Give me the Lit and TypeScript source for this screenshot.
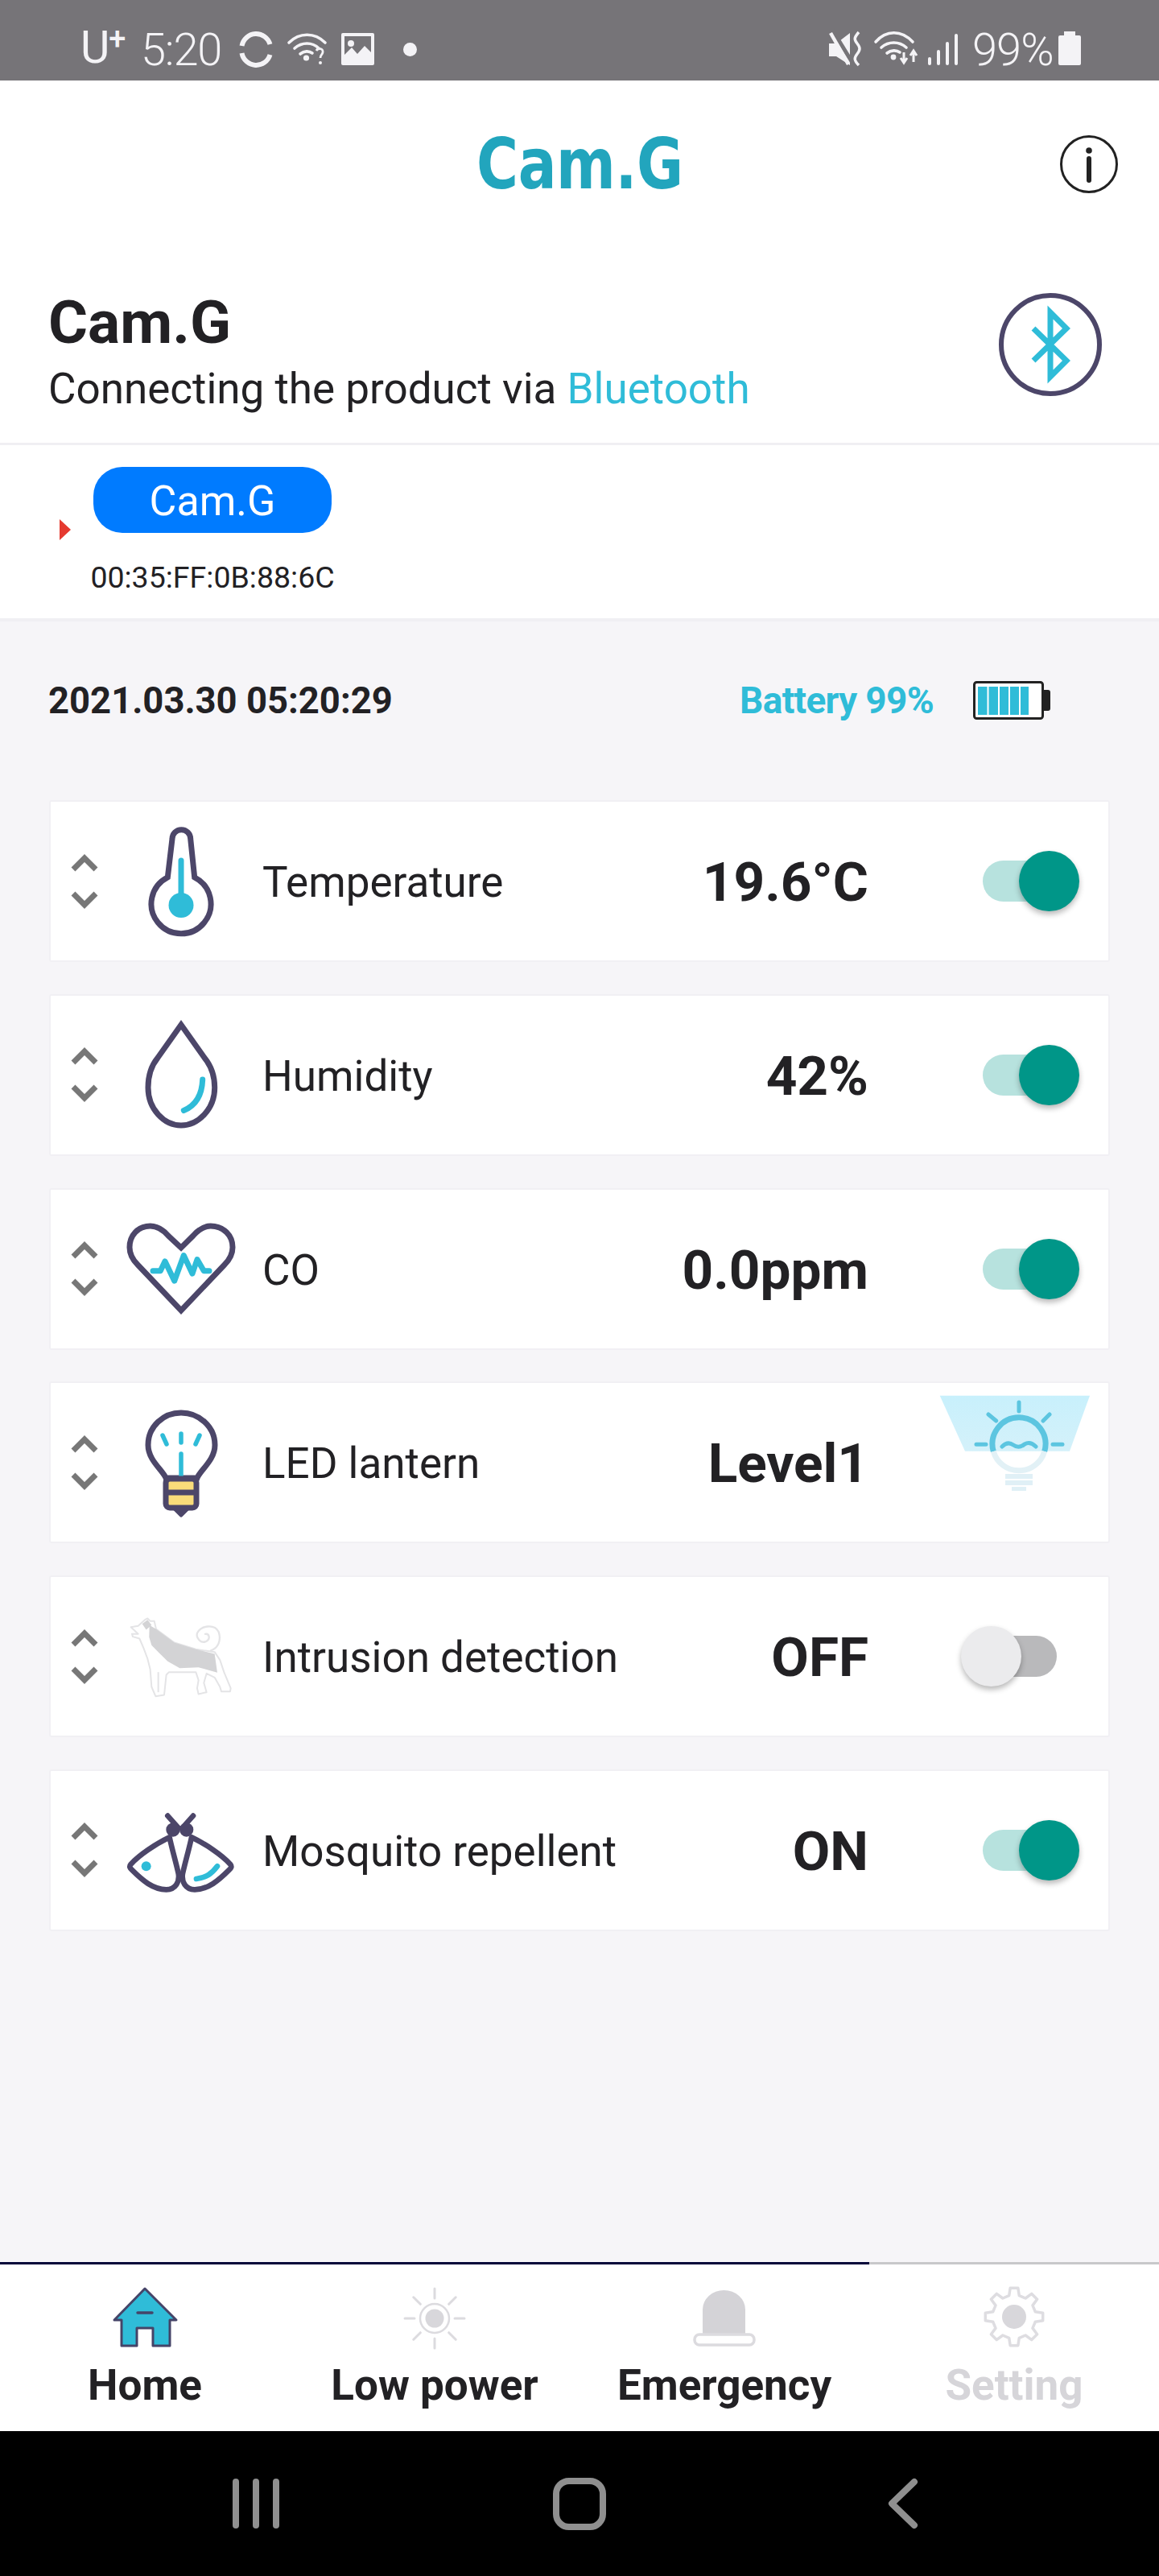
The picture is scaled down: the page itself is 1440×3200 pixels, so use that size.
import { LitElement, html, css, svg } from "lit";
import { customElement } from "lit/decorators.js";

const DARK = "#4c4669";
const TEAL = "#2fbcd8";

const thermo = svg`<path d="M48.3 59.8 L54 12 A11.3 11.3 0 0 1 76.7 12 L81.7 59.8 A37 37 0 1 1 48.3 59.8 Z" fill="none" stroke="${DARK}" stroke-width="7"/>
<path d="M65 39 V92" stroke="${TEAL}" stroke-width="7" stroke-linecap="round"/><circle cx="65" cy="94.5" r="15.5" fill="${TEAL}"/>`;

const drop = svg`<path d="M65 3 L36 44 C27 55 24 68 24 81 C24 108 44 128 65 128 C86 128 106.7 108 106.7 81 C106.7 68 103 55 94 44 Z" fill="none" stroke="${DARK}" stroke-width="7"/>
<path d="M91.7 71 C91 90 84 103 68.3 109.5" fill="none" stroke="${TEAL}" stroke-width="7" stroke-linecap="round"/>`;

const heart = svg`<path d="M65 39 L49 24 C42 16 35 12 26.7 12 C11 12 1 24 1 38.5 C1 47 5 54 11 60 L65 117 L119 60 C125 54 129 47 129 38.5 C129 24 118 12 101.7 12 C93 12 87 16 80 24 Z" fill="none" stroke="${DARK}" stroke-width="7"/>
<path d="M30 67.8 H39.3 L45 55.8 L56.7 80.2 L68.3 48.5 L79 71.2 L85 53.5 L93.3 67.8 H100" fill="none" stroke="${TEAL}" stroke-width="7" stroke-linecap="round" stroke-linejoin="round"/>`;

const bulb = svg`<path d="M46 84 C42 74 24 62 24 43 C24 20 43 3 65 3 C87 3 107 20 107 43 C107 62 89 74 85 84 Z" fill="none" stroke="${DARK}" stroke-width="7"/>
<path d="M65 54 V84 M65 29 V40 M42 31 L47 42 M88 31 L83 42" stroke="${TEAL}" stroke-width="5.5" stroke-linecap="round"/>
<path d="M55 120 L65 130 L75 120 Z" fill="${DARK}" stroke="${DARK}" stroke-width="5" stroke-linejoin="round"/>
<rect x="46" y="85" width="38" height="36" rx="5" fill="#f9dc7a" stroke="${DARK}" stroke-width="7"/>
<path d="M46 102 H84" stroke="${DARK}" stroke-width="7"/>`;

const dog = svg`<g transform="translate(-120,-12.5) scale(.3333)">
<path d="M665 210 C695 200 705 170 695 140 C680 110 630 115 615 145 C610 165 630 185 650 175 C665 165 660 145 645 148" fill="none" stroke="#e4e4e6" stroke-width="7" stroke-linecap="round"/>
<path d="M368 122 L395 118 L420 95 L430 90 L440 100 L455 100 L462 130 L530 180 L610 205 L680 215 L700 245 L715 290 L740 350 L738 362 L705 362 L700 345 L680 310 L650 295 L640 330 L650 365 L620 372 L615 350 L620 320 L610 290 L510 290 L500 300 L492 375 L460 380 L445 345 L440 280 L430 240 L415 200 L400 165 L375 158 L372 148 L395 148 Z" fill="#fff" stroke="#e4e4e6" stroke-width="6" stroke-linejoin="round"/>
<path d="M470 290 V365" stroke="#e4e4e6" stroke-width="6"/>
<path d="M437 115 L462 130 L530 180 L610 205 L680 222 L690 292 L620 272 L550 275 L505 250 L470 215 L445 190 L436 160 Z" fill="#d3d3d5"/>
<path d="M410 110 L430 95 L445 115 L425 132 Z" fill="#d3d3d5"/>
</g>`;

const moth = svg`<g transform="translate(-120,-254) scale(.3333)">
<path d="M505 830 L545 875 M600 830 L560 875" stroke="${DARK}" stroke-width="20" stroke-linecap="round"/>
<circle cx="525" cy="882" r="26" fill="${DARK}"/><circle cx="575" cy="882" r="26" fill="${DARK}"/>
<path d="M512 910 C460 935 400 975 368 1010 C360 1020 365 1025 372 1032 C410 1070 450 1105 500 1105 C535 1105 550 1075 545 1045 C535 1000 520 950 512 910 Z" fill="#fff" stroke="${DARK}" stroke-width="20" stroke-linejoin="round"/>
<path d="M594 910 C646 935 706 975 738 1010 C746 1020 741 1025 734 1032 C696 1070 656 1105 606 1105 C571 1105 556 1075 561 1045 C571 1000 586 950 594 910 Z" fill="#fff" stroke="${DARK}" stroke-width="20" stroke-linejoin="round"/>
<circle cx="425" cy="1018" r="18" fill="${TEAL}"/>
<path d="M612 1065 C650 1060 670 1045 690 1018" fill="none" stroke="${TEAL}" stroke-width="20" stroke-linecap="round"/>
</g>`;

function gearPath(cx: number, cy: number, rOut: number, rIn: number, teeth: number) {
  const pts: string[] = [];
  const step = (Math.PI * 2) / teeth;
  for (let i = 0; i < teeth; i++) {
    const a = i * step - Math.PI / 2;
    const corners: [number, number][] = [
      [rIn, a - step * 0.3],
      [rOut, a - step * 0.17],
      [rOut, a + step * 0.17],
      [rIn, a + step * 0.3],
    ];
    for (const [r, t] of corners) pts.push(`${(cx + r * Math.cos(t)).toFixed(1)} ${(cy + r * Math.sin(t)).toFixed(1)}`);
  }
  return "M" + pts.join(" L") + " Z";
}

function sunRays() {
  const out: string[] = [];
  for (let i = 0; i < 8; i++) {
    const a = (i * Math.PI) / 4;
    const r1 = 25, r2 = 37;
    out.push(`M${(40 + r1 * Math.cos(a)).toFixed(1)} ${(39 + r1 * Math.sin(a)).toFixed(1)} L${(40 + r2 * Math.cos(a)).toFixed(1)} ${(39 + r2 * Math.sin(a)).toFixed(1)}`);
  }
  return out.join(" ");
}

type Row = { label: string; value: string; icon: unknown; toggle: "on" | "off" | "lantern" };

const ROWS: Row[] = [
  { label: "Temperature", value: "19.6°C", icon: thermo, toggle: "on" },
  { label: "Humidity", value: "42%", icon: drop, toggle: "on" },
  { label: "CO", value: "0.0ppm", icon: heart, toggle: "on" },
  { label: "LED lantern", value: "Level1", icon: bulb, toggle: "lantern" },
  { label: "Intrusion detection", value: "OFF", icon: dog, toggle: "off" },
  { label: "Mosquito repellent", value: "ON", icon: moth, toggle: "on" },
];

@customElement("app-root")
export class AppRoot extends LitElement {
  static styles = css`
    :host {
      display: flex;
      flex-direction: column;
      width: 1440px;
      height: 3200px;
      font-family: Roboto, "Liberation Sans", sans-serif;
      color: #222124;
      background: #fff;
      overflow: hidden;
    }
    svg { display: block; overflow: visible; flex: none; }
    .status {
      height: 100px;
      flex: none;
      background: #767478;
      color: #f4f3f6;
      display: flex;
      justify-content: space-between;
      align-items: center;
      padding: 0 97px 0 100px;
      box-sizing: border-box;
    }
    .status-group { display: flex; align-items: center; height: 100px; }
    .carrier { font-size: 56px; font-weight: 400; line-height: 50px; width: 55px; margin-top: 18px; letter-spacing: -1px; white-space: nowrap; }
    .carrier sup { font-size: 38px; line-height: 0; vertical-align: 17px; font-weight: 500; }
    .stime { font-size: 56px; font-weight: 300; letter-spacing: -1.2px; line-height: 60px; margin-left: 20px; width: 99px; white-space: nowrap; margin-top: 24px; }
    .spct { font-size: 56px; font-weight: 300; letter-spacing: -1px; line-height: 60px; margin-left: 18px; width: 97px; white-space: nowrap; margin-top: 24px; }
    .s-sync { margin-left: 24px; margin-top: 22px; }
    .s-wifi { margin-left: 20px; margin-top: 22px; }
    .s-img { margin-left: 19px; margin-top: 22px; }
    .s-dot { margin-left: 36px; width: 17px; height: 17px; border-radius: 50%; background: #f4f3f6; margin-top: 22px; }
    .s-mute { margin-top: 21px; }
    .s-wifi2 { margin-left: 15px; margin-top: 19px; }
    .s-signal { margin-left: 11px; margin-top: 23px; }
    .s-batt { margin-left: 10px; margin-top: 20px; }

    .appbar {
      height: 208px;
      flex: none;
      display: grid;
      grid-template-columns: 1fr auto 1fr;
      align-items: center;
    }
    .logo {
      grid-column: 2;
      font-size: 88px;
      font-weight: 700;
      line-height: 88px;
      color: #22a5bd;
      letter-spacing: -0.5px;
      font-family: "DejaVu Sans", Roboto, sans-serif;
      transform: scaleX(.805);
    }
    .info { grid-column: 3; justify-self: end; margin-right: 51px; }

    .intro {
      height: 242px;
      flex: none;
      box-sizing: border-box;
      display: flex;
      justify-content: space-between;
      align-items: flex-start;
      padding: 55px 71px 0 60px;
    }
    .title { font-size: 75px; font-weight: 700; line-height: 74px; }
    .subtitle { font-size: 53px; line-height: 60px; margin-top: 16px; white-space: nowrap; }
    .subtitle span { color: #2fbcd8; }
    .bt { margin-top: 1px; }

    .device {
      height: 215px;
      flex: none;
      border-top: 3px solid #f0eff3;
      border-bottom: 4px solid #f0eff3;
      display: flex;
      padding-left: 74px;
    }
    .caret { width: 0; height: 0; border-left: 14px solid #e53a30; border-top: 13px solid transparent; border-bottom: 13px solid transparent; margin-top: 92px; }
    .dev-col { margin-left: 28px; width: 296px; padding-top: 27px; display: flex; flex-direction: column; align-items: center; }
    .chip { width: 296px; height: 82px; border-radius: 36px; background: #007bff; color: #fff; font-size: 52px; display: flex; align-items: center; justify-content: center; padding-top: 2px; box-sizing: border-box; }
    .mac { font-size: 37.5px; line-height: 44px; margin-top: 33px; white-space: nowrap; }

    main { flex: 1; background: #f6f5f8; display: flex; flex-direction: column; min-height: 0; }
    .meta { height: 196px; flex: none; box-sizing: border-box; display: flex; align-items: center; padding: 0 135px 0 60px; }
    .date { font-size: 45.4px; font-weight: 700; flex: 1; white-space: nowrap; }
    .battery { font-size: 46px; font-weight: 700; color: #2fbcd8; white-space: nowrap; letter-spacing: -.7px; }
    .batt-icon { margin-left: 49px; }
    .cards { margin: 26px 61px 0; display: flex; flex-direction: column; gap: 39.8px; }
    .card {
      height: 201px;
      box-sizing: border-box;
      background: #fff;
      border: 2px solid #f1f0f4;
      border-radius: 3px;
      display: grid;
      grid-template-columns: 34px 204px 1fr auto 298px;
      align-items: center;
      padding-left: 25px;
    }
    .icon-cell { padding-left: 38px; }
    .label { font-size: 53px; white-space: nowrap; padding-top: 3px; }
    .value { font-size: 67.5px; font-weight: 700; white-space: nowrap; padding-top: 2px; }
    .side { display: flex; align-items: center; height: 100%; }
    .track { position: relative; height: 51px; border-radius: 26px; }
    .track.on { margin-left: 142px; width: 103px; background: #b7e2de; }
    .track.off { margin-left: 132px; width: 102px; background: #b9b9bb; }
    .thumb { position: absolute; top: -12px; width: 75px; height: 75px; border-radius: 50%; box-shadow: 0 4px 7px rgba(0,0,0,.28); }
    .on .thumb { left: 45px; background: #009688; }
    .off .thumb { left: -17px; background: #ebebed; }
    .lantern { margin-left: 88px; align-self: flex-start; margin-top: 14px; }

    .tabs { height: 210px; flex: none; background: #fff; display: flex; flex-direction: column; }
    .rule { height: 3px; display: flex; flex: none; }
    .rule-a { width: 1080px; background: #05063a; }
    .rule-b { flex: 1; background: #c8c8ca; }
    .tab-row { display: grid; grid-template-columns: repeat(4, 360px); }
    .tab { display: flex; flex-direction: column; align-items: center; padding-top: 28px; }
    .tab-label { font-size: 53px; font-weight: 700; line-height: 60px; margin-top: 16px; white-space: nowrap; }
    .tab-label.dim { color: #d6d5d9; }

    .nav { height: 180px; flex: none; background: #000; display: grid; grid-template-columns: repeat(3, 402px); padding: 0 117px; align-items: center; justify-items: center; }
  `;

  private row(r: Row) {
    return html`<div class="card">
      <svg width="34" height="68" viewBox="0 0 34 68"><path d="M3 19 L17 5 L31 19 M3 49 L17 63 L31 49" fill="none" stroke="#777" stroke-width="7"/></svg>
      <div class="icon-cell"><svg width="130" height="130" viewBox="0 0 130 130">${r.icon}</svg></div>
      <div class="label">${r.label}</div>
      <div class="value">${r.value}</div>
      <div class="side">
        ${r.toggle === "lantern"
          ? html`<svg class="lantern" width="190" height="130" viewBox="0 0 190 130">
              <defs><linearGradient id="lg" x1="0" y1="0" x2="0" y2="1"><stop offset="0" stop-color="#c8f0fc"/><stop offset="1" stop-color="#d4f1fa"/></linearGradient></defs>
              <path d="M.7 1.7 H187 L162 70.7 H32 Z" fill="url(#lg)"/>
              <path d="M67.3 71 A33 33 0 1 1 130.7 71" fill="none" stroke="#5cc5e0" stroke-width="7"/>
              <path d="M130.7 71 A33 33 0 0 1 67.3 71" fill="none" stroke="#e2f1f6" stroke-width="7"/>
              <path d="M99 10 V21 M61 25 L70.7 33 M137 25 L129 33 M46 62.3 H58 M141 62.3 H153 M78 65 Q85 58 92 63 Q99 68 106 62 Q113 58 120 65" fill="none" stroke="#5cc5e0" stroke-width="5" stroke-linecap="round"/>
              <path d="M82 99 H116 V105 H82 Z M82 107 H116 V113 H82 Z M90 115 H108 V120 H90 Z" fill="#e0f0f6"/>
            </svg>`
          : html`<div class="track ${r.toggle}"><div class="thumb"></div></div>`}
      </div>
    </div>`;
  }

  render() {
    return html`
      <div class="status">
        <div class="status-group">
          <div class="carrier">U<sup>+</sup></div>
          <div class="stime">5:20</div>
          <svg class="s-sync" width="40" height="40" viewBox="0 0 40 40"><path d="M2.5 16 A18 18 0 0 1 37.5 14 M2.5 25 A18 18 0 0 0 37.5 27" fill="none" stroke="#f4f3f6" stroke-width="6"/></svg>
          <svg class="s-wifi" width="47" height="40" viewBox="0 0 47 40"><path d="M1 12 C14 -1 33 -1 46 12 M8 19 C17 11 30 11 38 19 M15 26 C20 22 26 22 30 25" fill="none" stroke="#f4f3f6" stroke-width="3.6" stroke-linecap="round"/><circle cx="22.5" cy="31" r="3.6" fill="#f4f3f6"/><path d="M35 22 C37 18 44 19 43 24 C42.5 27 40 27 40 31" fill="none" stroke="#f4f3f6" stroke-width="2.8"/><circle cx="40" cy="37" r="2" fill="#f4f3f6"/></svg>
          <svg class="s-img" width="41" height="40" viewBox="0 0 41 40"><path fill-rule="evenodd" d="M2 0 H39 A2 2 0 0 1 41 2 V38 A2 2 0 0 1 39 40 H2 A2 2 0 0 1 0 38 V2 A2 2 0 0 1 2 0 Z M4 4 V27 L13 18 L20 26 L29 16 L37 24 V4 Z" fill="#f4f3f6"/><circle cx="12" cy="13" r="4" fill="#f4f3f6"/></svg>
          <div class="s-dot"></div>
        </div>
        <div class="status-group">
          <svg class="s-mute" width="42" height="42" viewBox="0 0 42 42"><path d="M0 14 H9 L26 1 V41 L9 30 H0 Z" fill="#f4f3f6"/><path d="M4 -3 L31 41" stroke="#767478" stroke-width="5"/><path d="M2 1 L24 40" stroke="#f4f3f6" stroke-width="4.5"/><path d="M37 0 C31 7 31 9 35 14 C39 19 39 22 35 27 C31 32 31 35 37 41" fill="none" stroke="#f4f3f6" stroke-width="3.5"/></svg>
          <svg class="s-wifi2" width="55" height="41" viewBox="0 0 55 41"><path d="M1 13 C14 -2 33 -2 47 13 M8 20 C17 12 30 12 39 20 M15 27 C20 23 27 23 31 26" fill="none" stroke="#f4f3f6" stroke-width="3.6" stroke-linecap="round"/><circle cx="23" cy="32" r="3.4" fill="#f4f3f6"/><path d="M36 26 V38 M32 33 L36 39 L40 33 M48 38 V25 M44 30 L48 24 L52 30" fill="none" stroke="#f4f3f6" stroke-width="3"/></svg>
          <svg class="s-signal" width="37" height="39" viewBox="0 0 37 39"><g fill="#f4f3f6"><rect x="0" y="29" width="4" height="10" rx="2"/><rect x="11" y="20" width="4" height="19" rx="2"/><rect x="22" y="10" width="4" height="29" rx="2"/><rect x="33" y="0" width="4" height="39" rx="2"/></g></svg>
          <div class="spct">99%</div>
          <svg class="s-batt" width="28" height="42" viewBox="0 0 28 42"><path d="M7 0 H21 V5 H26 A2 2 0 0 1 28 7 V40 A2 2 0 0 1 26 42 H2 A2 2 0 0 1 0 40 V7 A2 2 0 0 1 2 5 H7 Z" fill="#f4f3f6"/></svg>
        </div>
      </div>

      <div class="appbar">
        <div class="logo">Cam.G</div>
        <svg class="info" width="72" height="72" viewBox="0 0 72 72">
          <circle cx="36" cy="36" r="34.5" fill="none" stroke="#222" stroke-width="3"/>
          <circle cx="36" cy="19" r="3.8" fill="#222"/>
          <path d="M36 29 V56" stroke="#222" stroke-width="6" stroke-linecap="round"/>
        </svg>
      </div>

      <div class="intro">
        <div>
          <div class="title">Cam.G</div>
          <div class="subtitle">Connecting the product via <span>Bluetooth</span></div>
        </div>
        <svg class="bt" width="128" height="128" viewBox="0 0 128 128">
          <circle cx="64" cy="64" r="61" fill="none" stroke="${DARK}" stroke-width="6"/>
          <path d="M43 44 L84 84 L64 104 L64 24 L84 44 L43 84" fill="none" stroke="${TEAL}" stroke-width="7"/>
        </svg>
      </div>

      <div class="device">
        <div class="caret"></div>
        <div class="dev-col">
          <div class="chip">Cam.G</div>
          <div class="mac">00:35:FF:0B:88:6C</div>
        </div>
      </div>

      <main>
        <div class="meta">
          <div class="date">2021.03.30 05:20:29</div>
          <div class="battery">Battery 99%</div>
          <svg class="batt-icon" width="96" height="48" viewBox="0 0 96 48">
            <rect x="1.5" y="1.5" width="85" height="45" rx="3" fill="#fff" stroke="#222" stroke-width="3"/>
            <path d="M87 11 H93 A3 3 0 0 1 96 14 V34 A3 3 0 0 1 93 37 H87 Z" fill="#222"/>
            <path d="M6 7 H17.5 V42 H6 Z M19.5 7 H31 V42 H19.5 Z M33 7 H44 V42 H33 Z M46 7 H57 V42 H46 Z M59 7 H69 V42 H59 Z" fill="${TEAL}"/>
          </svg>
        </div>
        <div class="cards">${ROWS.map((r) => this.row(r))}</div>
      </main>

      <div class="tabs">
        <div class="rule"><div class="rule-a"></div><div class="rule-b"></div></div>
        <div class="tab-row">
          <div class="tab">
            <svg width="80" height="76" viewBox="0 0 80 76"><path d="M40 2 L79 41 H71 V73 H50 V51 H30 V73 H11 V41 H2 Z" fill="${TEAL}" stroke="#454468" stroke-width="3" stroke-linejoin="round"/><path d="M31 32 H49" stroke="#454468" stroke-width="3.5" stroke-linecap="round"/></svg>
            <div class="tab-label">Home</div>
          </div>
          <div class="tab">
            <svg width="80" height="76" viewBox="0 0 80 76"><path d="${sunRays()}" stroke="#dcdbdf" stroke-width="3" stroke-linecap="round"/><circle cx="40" cy="39" r="18" fill="none" stroke="#dcdbdf" stroke-width="2.5"/><circle cx="40" cy="39" r="11.5" fill="#d8d7db"/></svg>
            <div class="tab-label">Low power</div>
          </div>
          <div class="tab">
            <svg width="80" height="76" viewBox="0 0 80 76"><path d="M13 58 V28 A26.5 24 0 0 1 66 28 V58 Z" fill="#d4d3d7"/><rect x="3" y="59" width="74" height="13" rx="6" fill="#fff" stroke="#dcdbdf" stroke-width="3.5"/></svg>
            <div class="tab-label">Emergency</div>
          </div>
          <div class="tab">
            <svg width="80" height="76" viewBox="0 0 80 76"><path d="${gearPath(40, 37, 36, 27, 8)}" fill="none" stroke="#dedde1" stroke-width="3.5" stroke-linejoin="round"/><circle cx="40" cy="37" r="15" fill="#d8d7db"/></svg>
            <div class="tab-label dim">Setting</div>
          </div>
        </div>
      </div>

      <div class="nav">
        <svg width="58" height="62" viewBox="0 0 58 62"><path d="M4 4 V58 M29 4 V58 M54 4 V58" stroke="#8f8f8f" stroke-width="8" stroke-linecap="round"/></svg>
        <svg width="66" height="65" viewBox="0 0 66 65"><rect x="4" y="4" width="58" height="57" rx="16" fill="none" stroke="#8f8f8f" stroke-width="8"/></svg>
        <svg width="36" height="62" viewBox="0 0 36 62"><path d="M32 4 L4 31 L32 58" fill="none" stroke="#8f8f8f" stroke-width="8" stroke-linecap="round" stroke-linejoin="round"/></svg>
      </div>
    `;
  }
}
